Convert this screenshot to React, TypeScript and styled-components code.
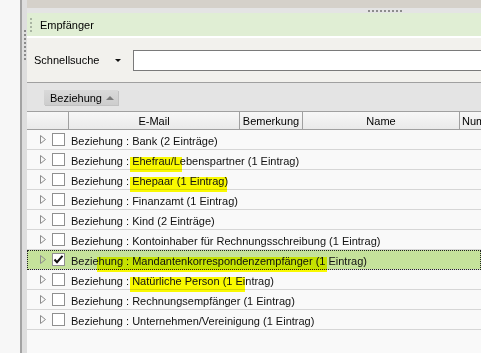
import * as React from 'react'
import styled, { createGlobalStyle } from 'styled-components'

type Part = { text: string; mark?: boolean }
type Entry = { parts: Part[]; checked?: boolean }

const ENTRIES: Entry[] = [
  { parts: [{ text: 'Beziehung : Bank (2 Einträge)' }] },
  {
    parts: [
      { text: 'Beziehung : ' },
      { text: 'Ehefrau/L', mark: true },
      { text: 'ebenspartner (1 Eintrag)' },
    ],
  },
  {
    parts: [
      { text: 'Beziehung : ' },
      { text: 'Ehepaar (1 Eintrag', mark: true },
      { text: ')' },
    ],
  },
  { parts: [{ text: 'Beziehung : Finanzamt (1 Eintrag)' }] },
  { parts: [{ text: 'Beziehung : Kind (2 Einträge)' }] },
  { parts: [{ text: 'Beziehung : Kontoinhaber für Rechnungsschreibung (1 Eintrag)' }] },
  {
    checked: true,
    parts: [
      { text: 'Bezie' },
      { text: 'hung : Mandantenkorrespondenzempfänger (1', mark: true },
      { text: ' Eintrag)' },
    ],
  },
  {
    parts: [
      { text: 'Beziehung : ' },
      { text: 'Natürliche Person (1 E', mark: true },
      { text: 'intrag)' },
    ],
  },
  { parts: [{ text: 'Beziehung : Rechnungsempfänger (1 Eintrag)' }] },
  { parts: [{ text: 'Beziehung : Unternehmen/Vereinigung (1 Eintrag)' }] },
]

const COLUMNS = [
  { label: '', width: 42 },
  { label: 'E-Mail', width: 171 },
  { label: 'Bemerkung', width: 63 },
  { label: 'Name', width: 157 },
  { label: 'Nummer', width: 90 },
]

export default function App() {
  return (
    <>
      <Global />
      <Window>
        <Gutter />
        <SideSplitter>
          <VGrip />
        </SideSplitter>
        <Main>
          <TopBand />
          <HSplitter>
            <HGrip />
          </HSplitter>
          <GroupHeader>
            <GroupGrip />
            Empfänger
          </GroupHeader>
          <SearchPanel>
            <SearchLabel>Schnellsuche</SearchLabel>
            <DropArrow />
            <SearchInput type="text" />
          </SearchPanel>
          <GroupByBar>
            <SortChip>
              Beziehung
              <SortArrow />
            </SortChip>
          </GroupByBar>
          <HeaderRow>
            {COLUMNS.map((col, i) => (
              <HeaderCell key={i} $width={col.width}>
                {col.label}
              </HeaderCell>
            ))}
          </HeaderRow>
          <Rows>
            {ENTRIES.map((entry, i) => (
              <Row key={i} $selected={entry.checked}>
                <Expander width="6" height="9" viewBox="0 0 6 9">
                  <polygon
                    points="0.5,0.5 5.5,4.5 0.5,8.5"
                    fill="none"
                    stroke="#8c8c8c"
                  />
                </Expander>
                <CheckBox>
                  {entry.checked && (
                    <svg width="11" height="11" viewBox="0 0 11 11">
                      <path
                        d="M1.5 5.5 L4 8.2 L9.5 1.8"
                        fill="none"
                        stroke="#111"
                        strokeWidth="2"
                      />
                    </svg>
                  )}
                </CheckBox>
                <RowText>
                  {entry.parts.map((p, j) =>
                    p.mark ? <Mark key={j}>{p.text}</Mark> : <span key={j}>{p.text}</span>
                  )}
                </RowText>
              </Row>
            ))}
          </Rows>
        </Main>
      </Window>
    </>
  )
}

const Global = createGlobalStyle`
  html, body {
    margin: 0;
    padding: 0;
    background: #f7f7f7;
  }
  body {
    font-family: "Liberation Sans", Arial, sans-serif;
    font-size: 11px;
    color: #000;
  }
`

const Window = styled.div`
  display: flex;
  height: 100vh;
  overflow: hidden;
`

const Gutter = styled.div`
  width: 20px;
  flex-shrink: 0;
  background: #f7f7f7;
`

const SideSplitter = styled.div`
  width: 5px;
  flex-shrink: 0;
  border-left: 2px solid #a3a3a3;
  background: #dedede;
  padding-top: 30px;
  display: flex;
  justify-content: center;
`

const VGrip = styled.div`
  width: 2px;
  height: 30px;
  background: repeating-linear-gradient(
    to bottom,
    #8a8a8a 0 2px,
    transparent 2px 4px
  );
`

const Main = styled.div`
  flex: 1;
  min-width: 0;
  display: flex;
  flex-direction: column;
  overflow: hidden;
  background: #f9f9f9;
`

const TopBand = styled.div`
  height: 8px;
  background: #d5d1ca;
`

const HSplitter = styled.div`
  height: 5px;
  background: #e4e4e4;
  display: flex;
  align-items: center;
  padding-left: 341px;
`

const HGrip = styled.div`
  width: 35px;
  height: 2px;
  background: repeating-linear-gradient(
    to right,
    #8c8c8c 0 2px,
    transparent 2px 4px
  );
`

const GroupHeader = styled.div`
  height: 23px;
  background: #e0eed4;
  display: flex;
  align-items: center;
  padding-left: 3px;
  gap: 8px;
  font-size: 11px;
`

const GroupGrip = styled.div`
  width: 2px;
  height: 14px;
  background: repeating-linear-gradient(
    to bottom,
    #a8b4a2 0 2px,
    transparent 2px 4px
  );
`

const SearchPanel = styled.div`
  height: 44px;
  border-top: 2px solid #fff;
  background: #f2f1ed;
  display: flex;
  align-items: center;
  padding-left: 7px;
`

const SearchLabel = styled.span`
  width: 81px;
  flex-shrink: 0;
`

const DropArrow = styled.span`
  width: 0;
  height: 0;
  border-left: 3px solid transparent;
  border-right: 3px solid transparent;
  border-top: 3px solid #111;
  margin-right: 12px;
  margin-top: 1px;
`

const SearchInput = styled.input`
  flex: 1;
  height: 21px;
  box-sizing: border-box;
  margin: 0 -10px 0 0;
  border: 1px solid #7a7a7a;
  background: #fff;
  outline: none;
`

const GroupByBar = styled.div`
  height: 28px;
  border-top: 1px solid #a0a0a0;
  background: #e4e4e4;
  display: flex;
  align-items: center;
  padding-left: 17px;
`

const SortChip = styled.div`
  width: 74px;
  height: 15px;
  box-sizing: border-box;
  padding: 0 4px 0 6px;
  display: flex;
  align-items: center;
  justify-content: space-between;
  background: linear-gradient(#d9d9d9, #cdcdcd);
  box-shadow: 1px 1px 0 #c2c2c2;
  margin-top: 1px;
`

const SortArrow = styled.span`
  width: 0;
  height: 0;
  border-left: 4px solid transparent;
  border-right: 4px solid transparent;
  border-bottom: 4px solid #7a7a7a;
`

const HeaderRow = styled.div`
  display: flex;
  height: 17px;
  border-top: 1px solid #a0a0a0;
  border-bottom: 1px solid #a0a0a0;
  background: linear-gradient(#f7f7f7, #eaeaea);
`

const HeaderCell = styled.div<{ $width: number }>`
  width: ${p => p.$width}px;
  flex-shrink: 0;
  box-sizing: border-box;
  border-right: 1px solid #a0a0a0;
  display: flex;
  align-items: center;
  justify-content: center;
  white-space: nowrap;
  overflow: hidden;
  &:last-child {
    justify-content: flex-start;
    padding-left: 2px;
  }
`

const Rows = styled.div`
  display: flex;
  flex-direction: column;
`

const Row = styled.div<{ $selected?: boolean }>`
  height: 19px;
  box-sizing: content-box;
  border-bottom: 1px solid #d6d6d6;
  display: flex;
  align-items: center;
  padding-left: 13px;
  padding-top: 0;
  white-space: nowrap;
  ${p =>
    p.$selected &&
    `
    background: #c5e29b;
    outline: 1px dotted #222;
    outline-offset: -1px;
  `}
`

const Expander = styled.svg`
  flex-shrink: 0;
  margin-right: 6px;
`

const CheckBox = styled.span`
  width: 13px;
  height: 13px;
  box-sizing: border-box;
  border: 1px solid #8f8f8f;
  background: #fff;
  flex-shrink: 0;
  display: flex;
  align-items: center;
  justify-content: center;
  margin-right: 6px;
`

const RowText = styled.span`
  color: #111;
  position: relative;
  top: 1px;
`

const Mark = styled.span`
  background: linear-gradient(transparent 2px, #ffff00 2px);
  mix-blend-mode: multiply;
  padding: 0 2px 5px;
  margin: 0 -2px;
`
